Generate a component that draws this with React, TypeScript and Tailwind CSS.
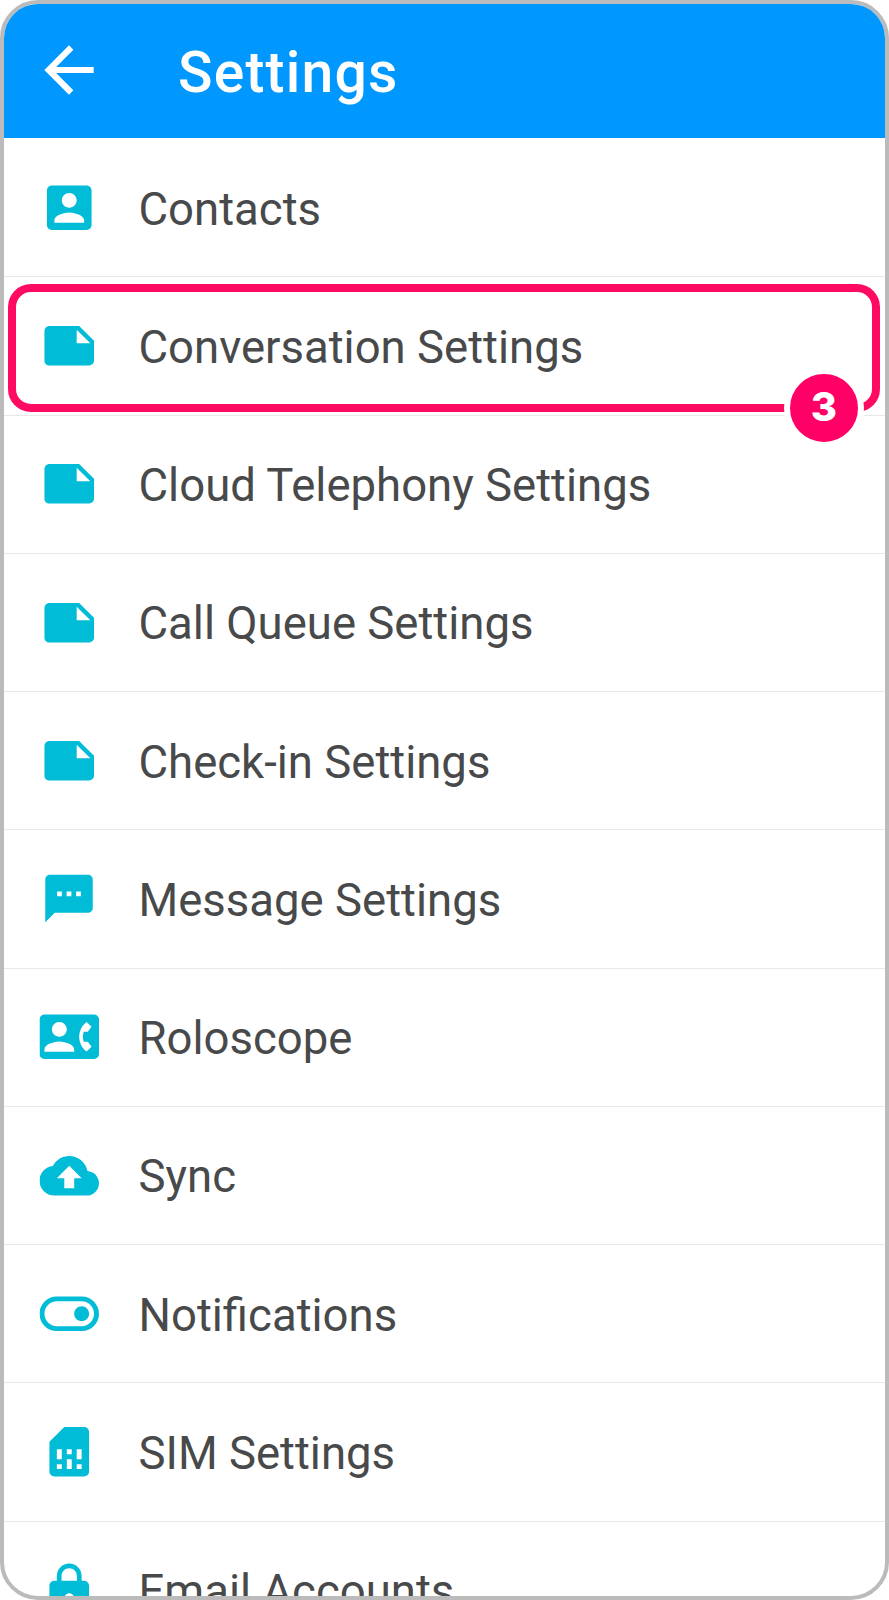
interface SettingsItem {
  label: string;
  icon: string;
  iconClass?: string;
  highlighted?: boolean;
}

const NOTE_ICON =
  "M22 10l-6-6H4c-1.1 0-2 .9-2 2v12.01c0 1.1.9 1.99 2 1.99l16-.01c1.1 0 2-.89 2-2v-8zm-7-4.5l5.5 5.5H15V5.5z";

const ITEMS: SettingsItem[] = [
  {
    label: "Contacts",
    icon: "M3 5v14c0 1.1.89 2 2 2h14c1.1 0 2-.9 2-2V5c0-1.1-.9-2-2-2H5c-1.11 0-2 .9-2 2zm12 4c0 1.66-1.34 3-3 3s-3-1.34-3-3 1.34-3 3-3 3 1.34 3 3zm-9 8c0-2 4-3.1 6-3.1s6 1.1 6 3.1v1H6v-1z",
  },
  { label: "Conversation Settings", icon: NOTE_ICON, highlighted: true },
  { label: "Cloud Telephony Settings", icon: NOTE_ICON },
  { label: "Call Queue Settings", icon: NOTE_ICON },
  { label: "Check-in Settings", icon: NOTE_ICON },
  {
    label: "Message Settings",
    icon: "M20 2H4c-1.1 0-1.99.9-1.99 2L2 22l4-4h14c1.1 0 2-.9 2-2V4c0-1.1-.9-2-2-2zM9 11H7V9h2v2zm4 0h-2V9h2v2zm4 0h-2V9h2v2z",
    iconClass: "size-[57px]",
  },
  {
    label: "Roloscope",
    icon: "M22 3H2C.9 3 0 3.9 0 5v14c0 1.1.9 2 2 2h20c1.1 0 1.99-.9 1.99-2L24 5c0-1.1-.9-2-2-2zM8 6c1.66 0 3 1.34 3 3s-1.34 3-3 3-3-1.34-3-3 1.34-3 3-3zm6 12H2v-1c0-2 4-3.1 6-3.1s6 1.1 6 3.1v1zm3.85-4h1.64L21 16l-1.99 1.99c-1.31-.98-2.28-2.38-2.73-3.99-.18-.64-.28-1.31-.28-2s.1-1.36.28-2c.45-1.62 1.42-3.01 2.73-3.99L21 8l-1.51 2h-1.64c-.22.63-.35 1.3-.35 2s.13 1.37.35 2z",
  },
  {
    label: "Sync",
    icon: "M19.35 10.04C18.67 6.59 15.64 4 12 4 9.11 4 6.6 5.64 5.35 8.04 2.34 8.36 0 10.91 0 14c0 3.31 2.69 6 6 6h13c2.76 0 5-2.24 5-5 0-2.64-2.05-4.78-4.65-4.96zM14 13v4h-4v-4H7l5-5 5 5h-3z",
  },
  {
    label: "Notifications",
    icon: "M17 5H7c-3.87 0-7 3.13-7 7s3.13 7 7 7h10c3.87 0 7-3.13 7-7s-3.13-7-7-7zm0 12H7c-2.76 0-5-2.24-5-5s2.24-5 5-5h10c2.76 0 5 2.24 5 5s-2.24 5-5 5zm0-8c-1.66 0-3 1.34-3 3s1.34 3 3 3 3-1.34 3-3-1.34-3-3-3z",
  },
  {
    label: "SIM Settings",
    icon: "M19.99 4c0-1.1-.89-2-1.99-2h-8L4 8v12c0 1.1.9 2 2 2h12.01c1.1 0 1.99-.9 1.99-2l-.01-16zM9 19H7v-2h2v2zm8 0h-2v-2h2v2zm-8-4H7v-4h2v4zm4 4h-2v-4h2v4zm0-6h-2v-2h2v2zm4 2h-2v-4h2v4z",
  },
  {
    label: "Email Accounts",
    icon: "M18 8h-1V6c0-2.76-2.24-5-5-5S7 3.24 7 6v2H6c-1.1 0-2 .9-2 2v10c0 1.1.9 2 2 2h12c1.1 0 2-.9 2-2V10c0-1.1-.9-2-2-2zm-6 9c-1.1 0-2-.9-2-2s.9-2 2-2 2 .9 2 2-.9 2-2 2zm3.1-9H8.9V6c0-1.71 1.39-3.1 3.1-3.1 1.71 0 3.1 1.39 3.1 3.1v2z",
  },
];

function MaterialIcon({ path, className }: { path: string; className: string }) {
  return (
    <svg viewBox="0 0 24 24" fill="currentColor" fillRule="evenodd" className={className}>
      <path d={path} />
    </svg>
  );
}

function StepHighlight({ step }: { step: number }) {
  return (
    <div className="absolute left-1 top-[7px] w-[872px] h-[128px] rounded-[23px] border-8 border-[#ff0a62]">
      <div className="absolute left-[768px] top-[76px] size-20 rounded-full border-[6px] border-white bg-[#ff0066] flex items-center justify-center">
        <span className="pb-[3px] font-['Inter',sans-serif] text-[40px] leading-none font-extrabold text-white">
          {step}
        </span>
      </div>
    </div>
  );
}

function SettingsRow({ item }: { item: SettingsItem }) {
  return (
    <li
      className={`flex items-center h-[138.27px] shrink-0 border-b border-[#e9e9e9] pl-[35px] ${
        item.highlighted ? "relative z-10" : ""
      }`}
    >
      <div className="flex items-center justify-center size-[59.5px] shrink-0 translate-x-[0.5px] text-[#00bcd7]">
        <MaterialIcon path={item.icon} className={item.iconClass ?? "size-full"} />
      </div>
      <span className="ml-10 pt-[4px] text-[45.5px] leading-[54px] whitespace-nowrap text-[#48494a]">
        {item.label}
      </span>
      {item.highlighted && <StepHighlight step={3} />}
    </li>
  );
}

export default function App() {
  return (
    <div className="w-[889px] h-[1600px] bg-white font-['Roboto',sans-serif]">
      <div className="flex flex-col h-full rounded-[38px] border-4 border-[#bbbbbb] overflow-hidden">
        <header className="flex items-center h-[134px] shrink-0 bg-[#0097ff] text-white">
          <MaterialIcon
            path="M20 11H7.83l5.59-5.59L12 4l-8 8 8 8 1.41-1.41L7.83 13H20v-2z"
            className="ml-7 mb-[3px] size-[74px]"
          />
          <h1 className="ml-[72px] pt-[3px] text-[57px] leading-[68px] font-medium tracking-[1.2px]">
            Settings
          </h1>
        </header>
        <ul className="flex flex-col pt-px">
          {ITEMS.map((item) => (
            <SettingsRow key={item.label} item={item} />
          ))}
        </ul>
      </div>
    </div>
  );
}
